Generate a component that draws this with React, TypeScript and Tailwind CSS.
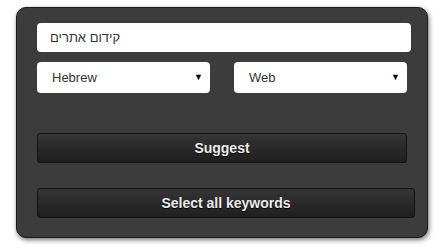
export default function App() {
  const selects = ['Hebrew', 'Web']

  return (
    <div className="w-[438px] h-[252px] bg-white font-['Liberation_Sans',Arial,sans-serif]">
      <div className="relative left-[16px] top-[7px] w-[412px] h-[231px] rounded-[10px] border border-[#1a1a1a] bg-[#3c3c3c] pl-[20px] pt-[15px] shadow-[1px_2px_5px_rgba(0,0,0,0.55)]">
        {/* Keyword */}
        <div className="w-[374px] h-[29px] rounded-[4px] bg-white pl-[13px] flex items-center text-[13px] text-[#333]">
          <span dir="rtl">קידום אתרים</span>
        </div>

        {/* Language / type */}
        <div className="mt-[10px] flex gap-[24px]">
          {selects.map((s) => (
            <div
              key={s}
              className="w-[173px] h-[31px] rounded-[4px] bg-white pl-[15px] pr-[7px] flex items-center justify-between text-[13px] text-[#333]"
            >
              <span>{s}</span>
              <span className="text-[9px] text-black">▼</span>
            </div>
          ))}
        </div>

        <button className="mt-[40px] w-[370px] h-[30px] rounded-[3px] border border-[#141414] bg-gradient-to-b from-[#353535] to-[#1f1f1f] text-[14px] font-bold text-[#ececec] [text-shadow:0_1px_1px_rgba(0,0,0,0.9)] block">
          Suggest
        </button>

        <button className="mt-[25px] w-[378px] h-[30px] rounded-[3px] border border-[#141414] bg-gradient-to-b from-[#353535] to-[#1f1f1f] text-[14px] font-bold text-[#ececec] [text-shadow:0_1px_1px_rgba(0,0,0,0.9)] block">
          Select all keywords
        </button>
      </div>
    </div>
  )
}
